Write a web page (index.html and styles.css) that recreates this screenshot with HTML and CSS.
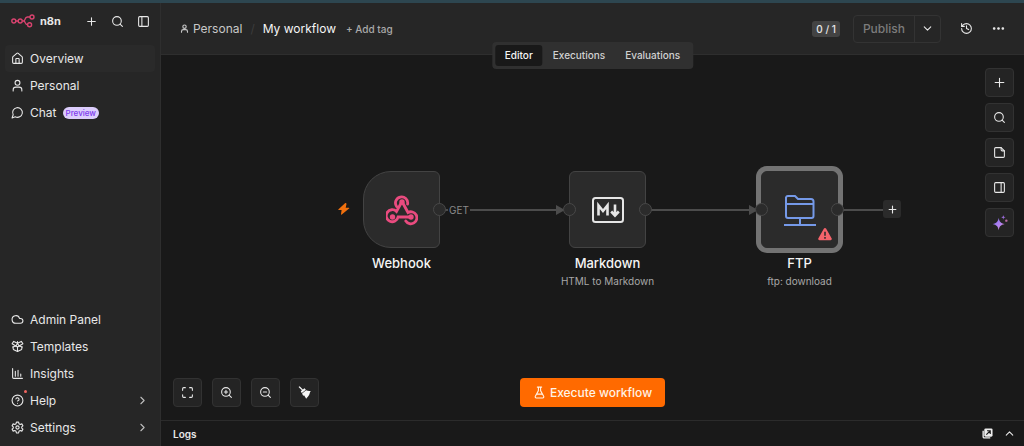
FILE: index.html
```
<!DOCTYPE html>
<html lang="en">

<head>
  <meta charset="UTF-8">
  <meta name="viewport" content="width=device-width, initial-scale=1.0">
  <title>My workflow - n8n</title>
  <link rel="stylesheet" href="styles.css">
</head>

<body>
  <div class="app">
    <aside class="sidebar">
      <div class="sidebar-top">
        <a class="logo" href="#" aria-label="n8n home">
          <svg class="logo-mark" viewBox="0 0 24 14" aria-hidden="true">
            <circle cx="2.8" cy="7" r="2" />
            <circle cx="9.2" cy="7" r="2" />
            <circle cx="21" cy="3" r="2" />
            <circle cx="18.6" cy="10.8" r="2" />
            <path d="M4.8 7h2.4M11.2 7h1M19 3h-2.6c-3.4 0-1.2 4-4.2 4 3 0 1.2 3.8 4.4 3.8" />
          </svg>
          <span>n8n</span>
        </a>
        <div class="sidebar-actions">
          <button class="icon-btn" aria-label="Create"><svg class="icon" viewBox="0 0 24 24"><path d="M5 12h14M12 5v14" /></svg></button>
          <button class="icon-btn" aria-label="Search"><svg class="icon" viewBox="0 0 24 24"><circle cx="11" cy="11" r="8" /><path d="m21 21-4.3-4.3" /></svg></button>
          <button class="icon-btn" aria-label="Collapse sidebar"><svg class="icon" viewBox="0 0 24 24"><rect x="3" y="3" width="18" height="18" rx="2" /><path d="M9 3v18" /></svg></button>
        </div>
      </div>

      <nav class="menu">
        <a class="menu-item active" href="#">
          <svg class="icon" viewBox="0 0 24 24"><path d="M15 21v-8a1 1 0 0 0-1-1h-4a1 1 0 0 0-1 1v8" /><path d="M3 10a2 2 0 0 1 .7-1.5l7-6a2 2 0 0 1 2.6 0l7 6A2 2 0 0 1 21 10v9a2 2 0 0 1-2 2H5a2 2 0 0 1-2-2z" /></svg>
          <span>Overview</span>
        </a>
        <a class="menu-item" href="#">
          <svg class="icon" viewBox="0 0 24 24"><circle cx="12" cy="7" r="4.5" /><path d="M4 22v-2a5 5 0 0 1 5-5h6a5 5 0 0 1 5 5v2" /></svg>
          <span>Personal</span>
        </a>
        <a class="menu-item" href="#">
          <svg class="icon" viewBox="0 0 24 24"><path d="M7.9 20A9 9 0 1 0 4 16.1L2 22Z" /></svg>
          <span>Chat</span>
          <span class="pill">Preview</span>
        </a>
      </nav>

      <nav class="menu menu-bottom">
        <a class="menu-item" href="#">
          <svg class="icon" viewBox="0 0 24 24"><path d="M17.5 19H9a7 7 0 1 1 6.7-9h1.8a4.5 4.5 0 1 1 0 9Z" /></svg>
          <span>Admin Panel</span>
        </a>
        <a class="menu-item" href="#">
          <svg class="icon" viewBox="0 0 24 24"><path d="M12 13v8M12 3v3M4 13v3a2 2 0 0 0 1.1 1.8l6 3a2 2 0 0 0 1.8 0l6-3A2 2 0 0 0 20 16v-3" /><path d="m12 6 7-3.4 3 4.4-7 4-3-5-3 5-7-4 3-4.4z" /><path d="m12 13-3-2-6 2M12 13l3-2 6 2" /></svg>
          <span>Templates</span>
        </a>
        <a class="menu-item" href="#">
          <svg class="icon" viewBox="0 0 24 24"><path d="M3 3v16a2 2 0 0 0 2 2h16M8 17V8M13 17V6M18 17v-4" /></svg>
          <span>Insights</span>
        </a>
        <a class="menu-item" href="#">
          <span class="icon-wrap">
            <svg class="icon" viewBox="0 0 24 24"><circle cx="12" cy="12" r="10" /><path d="M9.1 9a3 3 0 0 1 5.8 1c0 2-3 3-3 3M12 17h.01" /></svg>
            <span class="dot"></span>
          </span>
          <span>Help</span>
          <svg class="icon chevron" viewBox="0 0 24 24"><path d="m9 18 6-6-6-6" /></svg>
        </a>
        <a class="menu-item" href="#">
          <svg class="icon" viewBox="0 0 24 24"><path d="M10 2h4l.7 3 2.3 1.300 3-1 2 3.500-2.200 2.100v2.200l2.200 2.100-2 3.500-3-1-2.300 1.300-.7 3h-4l-.7-3L7 17.700l-3 1-2-3.500 2.200-2.100v-2.200L2 8.800l2-3.500 3 1L9.300 5z" /><circle cx="12" cy="12" r="3" /></svg>
          <span>Settings</span>
          <svg class="icon chevron" viewBox="0 0 24 24"><path d="m9 18 6-6-6-6" /></svg>
        </a>
      </nav>
    </aside>

    <main class="main">
      <header class="header">
        <div class="breadcrumb">
          <a class="crumb" href="#">
            <svg class="icon icon-sm" viewBox="0 0 24 24"><circle cx="12" cy="7" r="4.500" /><path d="M4 22v-2a5 5 0 0 1 5-5h6a5 5 0 0 1 5 5v2" /></svg>
            Personal
          </a>
          <span class="slash">/</span>
          <span class="workflow-name">My workflow</span>
          <button class="add-tag">+ Add tag</button>
        </div>
        <div class="header-actions">
          <span class="count">0 / 1</span>
          <div class="publish">
            <button class="publish-btn" disabled>Publish</button>
            <button class="publish-more" aria-label="Publish options"><svg class="icon" viewBox="0 0 24 24"><path d="m6 9 6 6 6-6" /></svg></button>
          </div>
          <button class="icon-btn" aria-label="History"><svg class="icon" viewBox="0 0 24 24"><path d="M3 12a9 9 0 1 0 9-9 9.700 9.700 0 0 0-6.700 2.700L3 8" /><path d="M3 3v5h5M12 7v5l4 2" /></svg></button>
          <button class="icon-btn" aria-label="More"><svg class="icon" viewBox="0 0 24 24"><g fill="currentColor"><circle cx="4" cy="12" r="1.500" /><circle cx="12" cy="12" r="1.500" /><circle cx="20" cy="12" r="1.500" /></g></svg></button>
        </div>
        <div class="tabs">
          <button class="tab selected">Editor</button>
          <button class="tab">Executions</button>
          <button class="tab">Evaluations</button>
        </div>
      </header>

      <section class="canvas">
        <svg class="edges" aria-hidden="true">
          <path class="edge" d="M279 155H396M485 155H588M677 155H724" />
          <path class="arrow" d="M395 150l9 5-9 5zM588 150l9 5-9 5z" />
        </svg>
        <span class="edge-label">GET</span>

        <svg class="trigger" viewBox="0 0 12 12" aria-hidden="true"><path d="M7 .3 .5 6.200c-.4.400-.2.900.300.900h2.800L3 11.200c-.1.600.400.800.800.400l7.300-6c.4-.4.200-.9-.3-.9H7.700L8.500 1C8.600.200 7.700-.3 7 .3z" /></svg>

        <div class="node node-webhook">
          <div class="node-box">
            <svg class="node-icon" viewBox="0 0 32 32">
              <g fill="none" stroke="#ea4b7f" stroke-width="2.800" stroke-linecap="round">
                <path d="M10.600 12.500a6.100 6.100 0 1 1 11-2.500M16 7.500 10.500 17.500a6 6 0 1 0 1.600 5.500H24" />
                <path d="m16 7.500 6 11a6 6 0 1 1-2.200 8.500" />
              </g>
              <g fill="#ea4b7f"><circle cx="16" cy="8" r="2.700" /><circle cx="6.500" cy="23" r="2.700" /><circle cx="25" cy="23" r="2.700" /></g>
            </svg>
            <span class="handle handle-out"></span>
          </div>
          <div class="node-name">Webhook</div>
        </div>

        <div class="node node-markdown">
          <div class="node-box">
            <svg class="node-icon" viewBox="0 0 32 32" fill="none" stroke="#e6e6e6">
              <rect x="1" y="4" width="30" height="24" rx="2.500" stroke-width="2" />
              <path d="M6.500 21.500v-10l4.500 5.500 4.500-5.500v10M23 10.500v10M19.200 17.500l3.800 4 3.800-4" stroke-width="2.600" />
            </svg>
            <span class="handle handle-in"></span>
            <span class="handle handle-out"></span>
          </div>
          <div class="node-name">Markdown</div>
          <div class="node-sub">HTML to Markdown</div>
        </div>

        <div class="node node-ftp">
          <div class="node-box">
            <svg class="node-icon" viewBox="0 0 32 32" fill="none" stroke="#7599e8" stroke-width="2">
              <path d="M2 22V3.500A2 2 0 0 1 4 2h7l3 3h13a2.500 2.500 0 0 1 2.500 2.500V22a2 2 0 0 1-2 2H4a2 2 0 0 1-2-2zM2 10h27.500M16 24v7M0 31h32" />
            </svg>
            <svg class="warning" viewBox="0 0 24 24"><path fill="#f5636b" d="M10.200 2.600a2.100 2.100 0 0 1 3.600 0l9.500 16.700A2.100 2.100 0 0 1 21.500 22.500h-19a2.100 2.100 0 0 1-1.800-3.200z" /><path stroke="#2b2b2b" stroke-width="2.600" d="M12 8v7M12 17v3" /></svg>
            <span class="handle handle-in"></span>
            <span class="handle handle-out"></span>
          </div>
          <div class="node-name">FTP</div>
          <div class="node-sub">ftp: download</div>
        </div>

        <button class="add-node" aria-label="Add node"><svg class="icon icon-sm" viewBox="0 0 24 24"><path d="M3 12h18M12 3v18" /></svg></button>

        <div class="tools tools-side">
          <button class="tool" aria-label="Add node"><svg class="icon" viewBox="0 0 24 24"><path d="M4 12h16M12 4v16" /></svg></button>
          <button class="tool" aria-label="Search nodes"><svg class="icon" viewBox="0 0 24 24"><circle cx="11" cy="11" r="8" /><path d="m21 21-4.300-4.300" /></svg></button>
          <button class="tool" aria-label="Add note"><svg class="icon" viewBox="0 0 24 24"><path d="M15 3H5a2 2 0 0 0-2 2v14a2 2 0 0 0 2 2h14a2 2 0 0 0 2-2V9z" /><path d="M15 3v4a2 2 0 0 0 2 2h4" /></svg></button>
          <button class="tool" aria-label="Toggle panel"><svg class="icon" viewBox="0 0 24 24"><rect x="3" y="3" width="18" height="18" rx="2" /><path d="M15 3v18" /></svg></button>
          <button class="tool" aria-label="Assistant">
            <svg class="sparkle" viewBox="0 0 24 24">
              <defs>
                <linearGradient id="ai" x1="0" y1="0" x2="1" y2="1"><stop offset="0" stop-color="#7d6bf5" /><stop offset=".6" stop-color="#b583ef" /><stop offset="1" stop-color="#ed7b9c" /></linearGradient>
              </defs>
              <path fill="url(#ai)" d="M10 4c1 6 3 8 9 9.500-6 1.500-8 3.500-9 9.500-1-6-3-8-9-9.500C7 12 9 10 10 4z" />
              <path fill="#9b6bd8" d="M17 0c.5 2.500 1 3 3.500 3.500C18 4 17.500 4.500 17 7c-.5-2.500-1-3-3.500-3.500C16 3 16.500 2.500 17 0z" />
              <circle cx="21.500" cy="8.500" r="1.800" fill="#bb6aa5" />
            </svg>
          </button>
        </div>

        <div class="canvas-footer">
          <div class="tools">
            <button class="tool" aria-label="Fit view"><svg class="icon" viewBox="0 0 24 24"><path d="M3 8V5a2 2 0 0 1 2-2h3M16 3h3a2 2 0 0 1 2 2v3M21 16v3a2 2 0 0 1-2 2h-3M8 21H5a2 2 0 0 1-2-2v-3" /></svg></button>
            <button class="tool" aria-label="Zoom in"><svg class="icon" viewBox="0 0 24 24"><circle cx="11" cy="11" r="8" /><path d="m21 21-4.300-4.300M11 8v6M8 11h6" /></svg></button>
            <button class="tool" aria-label="Zoom out"><svg class="icon" viewBox="0 0 24 24"><circle cx="11" cy="11" r="8" /><path d="m21 21-4.300-4.300M8 11h6" /></svg></button>
            <button class="tool" aria-label="Tidy up"><svg class="broom" viewBox="0 0 24 24"><path d="m1 2 2-1.500 6 6L12 4l2.500 3-7.500 6-2-3 2.200-2zM7.500 14 15 8c3 1.500 6 1.500 9 1-2 1.500-2 3-2.500 5-.8 4-4 6.500-6.500 9.500-1-3-2.500-3.500-3.500-6-1.200.5-2 .3-2.500-.5z" /></svg></button>
          </div>
          <button class="execute">
            <svg class="icon" viewBox="0 0 24 24"><path d="M14 2v6a2 2 0 0 0 .2 1l5.500 10a2 2 0 0 1-1.700 3H6a2 2 0 0 1-1.700-3L9.800 9a2 2 0 0 0 .2-1V2M6.500 15h11M8 2h8" /></svg>
            Execute workflow
          </button>
        </div>
      </section>

      <footer class="logs">
        <span class="logs-title">Logs</span>
        <div class="logs-actions">
          <button class="icon-btn" aria-label="Pop out"><svg class="popout" viewBox="0 0 24 24"><path fill="#ededed" d="M8 1h12a3 3 0 0 1 3 3v12a3 3 0 0 1-3 3H8a3 3 0 0 1-3-3V4a3 3 0 0 1 3-3z" /><path fill="none" stroke="#ededed" stroke-width="3" d="M2.500 6v13a2.500 2.500 0 0 0 2.500 2.500h13" /><path fill="none" stroke="#191919" stroke-width="2.500" d="m9.500 14.500 8-8M11 6h7v7" /></svg></button>
          <button class="icon-btn" aria-label="Open logs"><svg class="icon" viewBox="0 0 24 24"><path d="m6 15 6-6 6 6" /></svg></button>
        </div>
      </footer>
    </main>
  </div>
</body>

</html>
```
FILE: styles.css
```
* {
  margin: 0;
  padding: 0;
  box-sizing: border-box;
}

body {
  font-family: Inter, sans-serif;
  font-size: 12px;
  line-height: 16px;
  color: #e8e8e8;
  background: #191919;
}

button {
  font: inherit;
  color: inherit;
  background: none;
  border: none;
  cursor: pointer;
}

a {
  color: inherit;
  text-decoration: none;
}

.app {
  display: flex;
  height: 100vh;
  border-top: 3px solid #2d4650;
}

.icon {
  display: block;
  flex: none;
  width: 13px;
  height: 13px;
  fill: none;
  stroke: currentColor;
  stroke-width: 2;
  stroke-linecap: round;
  stroke-linejoin: round;
}

.icon-sm {
  width: 9px;
  height: 9px;
  stroke-width: 3;
}

.icon-btn {
  display: flex;
}

/* sidebar */

.sidebar {
  display: flex;
  flex-direction: column;
  flex: none;
  width: 161px;
  padding: 8px 5px 5px;
  background: #262626;
  border-right: 1px solid #2e2e2e;
}

.sidebar-top {
  display: flex;
  align-items: center;
  justify-content: space-between;
  height: 20px;
  padding: 0 5px 0 6px;
  margin-bottom: 14px;
}

.logo {
  display: flex;
  align-items: center;
  gap: 5px;
  font-size: 11px;
  font-weight: 700;
}

.logo-mark {
  width: 24px;
  height: 14px;
  fill: none;
  stroke: #d9436f;
  stroke-width: 1.4;
}

.sidebar-actions {
  display: flex;
  gap: 13px;
}

.menu-item {
  display: flex;
  align-items: center;
  gap: 6px;
  height: 27px;
  padding: 0 6px;
  border-radius: 4px;
}

.menu-item.active {
  background: #2a2a2a;
}

.menu-bottom {
  margin-top: auto;
}

.pill {
  padding: 0 3px;
  border-radius: 6px;
  font-size: 8px;
  line-height: 12px;
  font-weight: 500;
  color: #7c3aed;
  background: #dccdfc;
}

.icon-wrap {
  position: relative;
}

.dot {
  position: absolute;
  top: -4px;
  right: -3px;
  width: 3px;
  height: 3px;
  border-radius: 50%;
  background: #f0655f;
}

.chevron {
  margin-left: auto;
  color: #bdbdbd;
}

/* header */

.main {
  display: flex;
  flex-direction: column;
  flex: 1;
  min-width: 0;
}

.header {
  position: relative;
  display: flex;
  align-items: center;
  justify-content: space-between;
  height: 52px;
  padding: 0 19px;
  background: #262626;
  border-bottom: 1px solid #2e2e2e;
}

.breadcrumb,
.crumb,
.header-actions {
  display: flex;
  align-items: center;
}

.crumb {
  gap: 4px;
  color: #c8c8c8;
}

.slash {
  margin: 0 8px;
  color: #3c3c3c;
}

.workflow-name {
  color: #f5f5f5;
}

.add-tag {
  margin-left: 10px;
  font-size: 10px;
  font-weight: 500;
  color: #aaaaaa;
}

.header-actions {
  gap: 19px;
}

.count {
  padding: 0 4px;
  border-radius: 3px;
  font-size: 10px;
  font-weight: 500;
  background: #434343;
  margin-right: -6px;
}

.publish {
  display: flex;
  height: 28px;
  border: 1px solid #333333;
  border-radius: 4px;
}

.publish-btn {
  padding: 0 9px;
  font-weight: 500;
  color: #7c7c7c;
}

.publish-more {
  display: flex;
  align-items: center;
  padding: 0 6px;
  border-left: 1px solid #333333;
}

.tabs {
  position: absolute;
  top: 39px;
  left: 50%;
  z-index: 1;
  display: flex;
  padding: 3px;
  border-radius: 4px;
  background: #303030;
  transform: translateX(-50%);
}

.tab {
  padding: 0 10px;
  border-radius: 3px;
  font-size: 10px;
  line-height: 21px;
  font-weight: 500;
  color: #d2d2d2;
}

.tab.selected {
  color: #f5f5f5;
  background: #191919;
}

/* canvas */

.canvas {
  position: relative;
  flex: 1;
  overflow: hidden;
}

.edges {
  position: absolute;
  width: 100%;
  height: 100%;
}

.edge {
  fill: none;
  stroke: #4c4c4c;
  stroke-width: 2;
}

.arrow {
  fill: #4c4c4c;
}

.edge-label {
  position: absolute;
  top: 147px;
  left: 287px;
  padding: 0 1px;
  font-size: 10px;
  color: #8a8a8a;
  background: #191919;
}

.trigger {
  position: absolute;
  top: 148px;
  left: 177px;
  width: 12px;
  height: 12px;
  fill: #f0700e;
}

.node {
  position: absolute;
  top: 116px;
  display: flex;
  flex-direction: column;
  align-items: center;
  width: 77px;
  white-space: nowrap;
}

.node-webhook {
  left: 202px;
}

.node-markdown {
  left: 408px;
}

.node-ftp {
  left: 600px;
}

.node-box {
  position: relative;
  display: grid;
  place-items: center;
  width: 77px;
  height: 77px;
  margin-bottom: 6px;
  border: 1px solid #434343;
  border-radius: 6px;
  background: #2b2b2b;
}

.node-webhook .node-box {
  border-radius: 28px 6px 6px 28px;
}

.node-ftp .node-box {
  border-color: #2b2b2b;
  box-shadow: 0 0 0 5px #737373;
}

.node-icon {
  width: 32px;
  height: 32px;
}

.handle {
  position: absolute;
  top: 31px;
  width: 13px;
  height: 13px;
  border: 1px solid #484848;
  border-radius: 50%;
  background: #2b2b2b;
}

.handle-in {
  left: -7px;
}

.handle-out {
  right: -7px;
}

.warning {
  position: absolute;
  right: 5px;
  bottom: 6px;
  width: 14px;
  height: 14px;
}

.node-name {
  font-size: 13px;
  line-height: 18px;
  font-weight: 500;
  color: #f5f5f5;
}

.node-sub {
  font-size: 10px;
  line-height: 18px;
  color: #a8a8a8;
}

.add-node {
  position: absolute;
  top: 145px;
  left: 722px;
  display: grid;
  place-items: center;
  width: 18px;
  height: 18px;
  border-radius: 3px;
  background: #2b2b2b;
}

.tools {
  display: flex;
  gap: 10px;
}

.tool {
  display: grid;
  place-items: center;
  width: 29px;
  height: 29px;
  border: 1px solid #323232;
  border-radius: 4px;
  background: #242424;
}

.tools-side {
  position: absolute;
  top: 13px;
  right: 10px;
  flex-direction: column;
  gap: 6px;
}

.sparkle {
  width: 16px;
  height: 16px;
}

.broom {
  width: 13px;
  height: 13px;
  fill: #f5f5f5;
}

.canvas-footer {
  position: absolute;
  bottom: 13px;
  left: 12px;
  right: 12px;
  display: grid;
  grid-template-columns: 1fr auto 1fr;
}

.execute {
  display: flex;
  align-items: center;
  gap: 4px;
  padding: 0 13px;
  border-radius: 4px;
  font-weight: 500;
  color: #fff3e6;
  background: #ff6a00;
}

/* logs */

.logs {
  display: flex;
  align-items: center;
  justify-content: space-between;
  height: 26px;
  padding: 0 8px 0 12px;
  border-top: 1px solid #2b2b2b;
}

.logs-title {
  font-size: 10px;
  font-weight: 600;
}

.logs-actions {
  display: flex;
  align-items: center;
  gap: 10px;
}

.popout {
  width: 11px;
  height: 11px;
}
```
